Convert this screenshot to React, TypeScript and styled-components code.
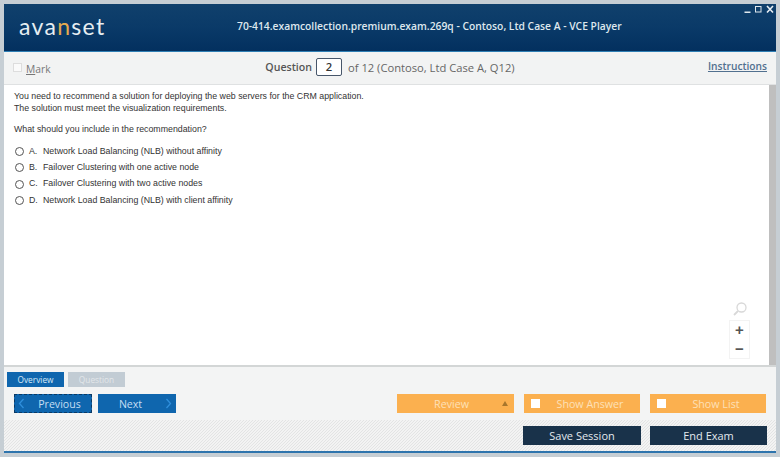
import React from "react";
import styled, { createGlobalStyle } from "styled-components";

const Global = createGlobalStyle`
  html, body { margin: 0; padding: 0; background: #c6ced4; }
  * { box-sizing: border-box; }
`;

const Page = styled.div`
  width: 780px;
  height: 457px;
  padding: 4px 4px 0;
  background: #c6ced4;
  overflow: hidden;
  display: flex;
  flex-direction: column;
`;

const Header = styled.header`
  position: relative;
  flex: 0 0 48px;
  display: flex;
  align-items: center;
  padding: 0 0 3px 15px;
  background: linear-gradient(180deg, #10406c 0%, #0a3a68 50%, #03305f 100%);
  border-bottom: 1px solid #2f7fb5;
`;

const Logo = styled.div`
  width: 218px;
  font-family: "Lato", sans-serif;
  font-weight: 400;
  font-size: 23px;
  line-height: 26px;
  letter-spacing: 1.3px;
  color: #e6eef2;
  span { color: #e5a94f; }
`;

const Title = styled.div`
  font-family: "Open Sans", sans-serif;
  font-weight: 600;
  font-size: 10.3px;
  color: #dfe8ee;
  white-space: nowrap;
`;

const WindowControls = styled.div`
  position: absolute;
  top: 1px;
  right: 2px;
  display: flex;
  align-items: center;
  gap: 4px;
  svg { display: block; }
`;

const TopBar = styled.div`
  flex: 0 0 33px;
  display: grid;
  grid-template-columns: 1fr auto 1fr;
  align-items: center;
  padding: 0 9px;
  background: #f2f3f3;
  border-bottom: 1px solid #dfe1e2;
  font-family: "Open Sans", sans-serif;
  color: #666;
`;

const MarkLabel = styled.label`
  display: flex;
  align-items: center;
  gap: 4px;
  font-size: 10.3px;
  color: #777;
  margin-top: 2px;
  u { text-decoration-thickness: 1px; }
`;

const MarkBox = styled.span`
  width: 9px;
  height: 9px;
  background: #fafafa;
  border: 1px solid #ddd;
  margin-bottom: 3px;
`;

const QuestionInfo = styled.div`
  display: flex;
  align-items: center;
  font-size: 11.2px;
  margin-bottom: 2px;
  b { font-weight: 600; font-size: 10.6px; color: #555; }
`;

const QuestionNumber = styled.span`
  width: 26px;
  height: 18px;
  margin: 0 6px 0 4px;
  border: 1px solid #47566a;
  border-radius: 2px;
  background: #fff;
  color: #333;
  font-weight: 600;
  text-align: center;
  line-height: 16px;
`;

const Instructions = styled.a`
  justify-self: end;
  margin: 0 0 4px;
  font-size: 10.2px;
  font-weight: 600;
  color: #51708f;
  text-decoration: underline;
`;

const ContentRow = styled.div`
  flex: 0 0 280px;
  display: flex;
  background: #fff;
`;

const Content = styled.main`
  position: relative;
  flex: 1;
  padding: 6px 10px;
  font-family: "Liberation Sans", sans-serif;
  font-size: 8.8px;
  line-height: 11.5px;
  color: #333;
`;

const Scrollbar = styled.div`
  flex: 0 0 7px;
  background: #bfbfbf;
`;

const Paragraph = styled.p`
  margin: 0 0 10px;
`;

const Options = styled.div`
  display: flex;
  flex-direction: column;
  margin-top: -2px;
`;

const OptionRow = styled.div`
  height: 16.3px;
  display: flex;
  align-items: center;
`;

const Radio = styled.span`
  width: 9px;
  height: 9px;
  border-radius: 50%;
  border: 1px solid #555;
  background: #fff;
  margin: 0 5px 0 1px;
`;

const OptionLetter = styled.span`
  width: 14px;
`;

const ZoomTools = styled.div`
  position: absolute;
  right: 19px;
  bottom: 6px;
  display: flex;
  flex-direction: column;
  align-items: center;
`;

const ZoomButtons = styled.div`
  width: 21px;
  height: 39px;
  margin-top: 3px;
  display: flex;
  flex-direction: column;
  align-items: center;
  justify-content: space-around;
  border: 1px solid #f3f3f3;
  font-family: "Liberation Sans", sans-serif;
  font-size: 15px;
  font-weight: 700;
  line-height: 16px;
  color: #555;
`;

const Footer = styled.div`
  flex: 0 0 55px;
  display: flex;
  flex-direction: column;
  background: #f3f4f4;
  border-top: 2px solid #d3d6d6;
  font-family: "Open Sans", sans-serif;
`;

const Tabs = styled.div`
  display: flex;
  gap: 4px;
  padding: 5px 0 0 3px;
`;

const Tab = styled.div<{ $active?: boolean }>`
  width: 57px;
  height: 15px;
  text-align: center;
  font-size: 8.3px;
  line-height: 15px;
  background: ${(p) => (p.$active ? "#0f66ae" : "#c2ccd4")};
  color: ${(p) => (p.$active ? "#d6e9f7" : "#e2e7ea")};
`;

const ActionRow = styled.div`
  display: flex;
  align-items: center;
  margin-top: 7px;
  padding: 0 10px;
`;

const NavButton = styled.div<{ $focused?: boolean }>`
  width: 78px;
  height: 19px;
  margin-right: 6px;
  padding: 0 4px;
  display: flex;
  align-items: center;
  justify-content: space-between;
  background: #0f66ae;
  color: #c4def3;
  font-size: 10.6px;
  outline: ${(p) => (p.$focused ? "1px dashed #0a3a66" : "none")};
  outline-offset: -1px;
`;

const NavLabel = styled.span<{ $shift: number }>`
  flex: 1;
  text-align: center;
  padding-left: ${(p) => Math.max(p.$shift, 0)}px;
  padding-right: ${(p) => Math.max(-p.$shift, 0)}px;
`;

const Spacer = styled.div`
  flex: 1;
`;

const OrangeButton = styled.div`
  position: relative;
  width: 116px;
  height: 19px;
  margin-left: 10px;
  display: flex;
  align-items: center;
  justify-content: center;
  padding-left: 16px;
  background: #fbb04f;
  color: #fde0b8;
  font-size: 10.7px;
`;

const ReviewButton = styled(OrangeButton)`
  width: 117px;
  padding: 0 8px 0 0;
`;

const OrangeCheck = styled.span`
  position: absolute;
  left: 7px;
  top: 5px;
  width: 9px;
  height: 9px;
  background: #fff;
`;

const ReviewArrow = styled.span`
  position: absolute;
  right: 6px;
  top: 7px;
  border-left: 3.5px solid transparent;
  border-right: 3.5px solid transparent;
  border-bottom: 5px solid #a8762c;
`;

const SessionBar = styled.div`
  flex: 0 0 31px;
  display: flex;
  justify-content: flex-end;
  align-items: center;
  gap: 9px;
  padding: 0 9px 1px 0;
  background: repeating-linear-gradient(135deg, #e3e4e4 0 0.7071px, #f3f3f3 0.7071px 2.1213px);
  font-family: "Open Sans", sans-serif;
`;

const DarkButton = styled.div<{ $w: number }>`
  width: ${(p) => p.$w}px;
  height: 19px;
  background: #19324a;
  color: #e3e9ee;
  text-align: center;
  font-size: 11px;
  line-height: 20px;
`;

const BottomLine = styled.div`
  flex: 0 0 2px;
  background: #2e74ad;
`;

const OPTIONS: [string, string][] = [
  ["A.", "Network Load Balancing (NLB) without affinity"],
  ["B.", "Failover Clustering with one active node"],
  ["C.", "Failover Clustering with two active nodes"],
  ["D.", "Network Load Balancing (NLB) with client affinity"],
];

const Chevron = ({ dir }: { dir: "l" | "r" }) => (
  <svg width="7" height="11" viewBox="0 0 7 11" fill="none" stroke="#2f8fdc" strokeWidth="1.3">
    <path d={dir === "l" ? "M5.5 1 1.5 5.5 5.5 10" : "M1.5 1 5.5 5.5 1.5 10"} />
  </svg>
);

export default function App() {
  return (
    <Page>
      <Global />
      <Header>
        <Logo>
          ava<span>n</span>set
        </Logo>
        <Title>70-414.examcollection.premium.exam.269q - Contoso, Ltd Case A - VCE Player</Title>
        <WindowControls>
          <svg width="7" height="9" viewBox="0 0 7 9">
            <rect x="0.5" y="6.5" width="6" height="1.5" fill="#dfe8ee" />
          </svg>
          <svg width="7" height="9" viewBox="0 0 7 9" fill="none" stroke="#dfe8ee">
            <rect x="0.5" y="1.5" width="5.5" height="5.5" />
          </svg>
          <svg width="8" height="9" viewBox="0 0 8 9" fill="none" stroke="#e8eff4" strokeWidth="1.6">
            <path d="M1 1 7 7.5M7 1 1 7.5" />
          </svg>
        </WindowControls>
      </Header>
      <TopBar>
        <MarkLabel>
          <MarkBox />
          <span>
            <u>M</u>ark
          </span>
        </MarkLabel>
        <QuestionInfo>
          <b>Question</b>
          <QuestionNumber>2</QuestionNumber>
          of 12 (Contoso, Ltd Case A, Q12)
        </QuestionInfo>
        <Instructions>Instructions</Instructions>
      </TopBar>
      <ContentRow>
        <Content>
          <Paragraph>
            You need to recommend a solution for deploying the web servers for the CRM application.
            <br />
            The solution must meet the visualization requirements.
          </Paragraph>
          <Paragraph>What should you include in the recommendation?</Paragraph>
          <Options>
            {OPTIONS.map(([letter, text]) => (
              <OptionRow key={letter}>
                <Radio />
                <OptionLetter>{letter}</OptionLetter>
                {text}
              </OptionRow>
            ))}
          </Options>
          <ZoomTools>
            <svg width="16" height="16" viewBox="0 0 16 16" fill="none" stroke="#d8d8d8" strokeWidth="1.3">
              <circle cx="9.5" cy="6.5" r="4.5" />
              <path d="M6 10 2 14" strokeWidth="1.8" />
            </svg>
            <ZoomButtons>
              <span>+</span>
              <span>−</span>
            </ZoomButtons>
          </ZoomTools>
        </Content>
        <Scrollbar />
      </ContentRow>
      <Footer>
        <Tabs>
          <Tab $active>Overview</Tab>
          <Tab>Question</Tab>
        </Tabs>
        <ActionRow>
          <NavButton $focused>
            <Chevron dir="l" />
            <NavLabel $shift={6}>Previous</NavLabel>
          </NavButton>
          <NavButton>
            <NavLabel $shift={-6}>Next</NavLabel>
            <Chevron dir="r" />
          </NavButton>
          <Spacer />
          <ReviewButton>
            Review
            <ReviewArrow />
          </ReviewButton>
          <OrangeButton>
            <OrangeCheck />
            Show Answer
          </OrangeButton>
          <OrangeButton>
            <OrangeCheck />
            Show List
          </OrangeButton>
        </ActionRow>
      </Footer>
      <SessionBar>
        <DarkButton $w={118}>Save Session</DarkButton>
        <DarkButton $w={117}>End Exam</DarkButton>
      </SessionBar>
      <BottomLine />
    </Page>
  );
}
